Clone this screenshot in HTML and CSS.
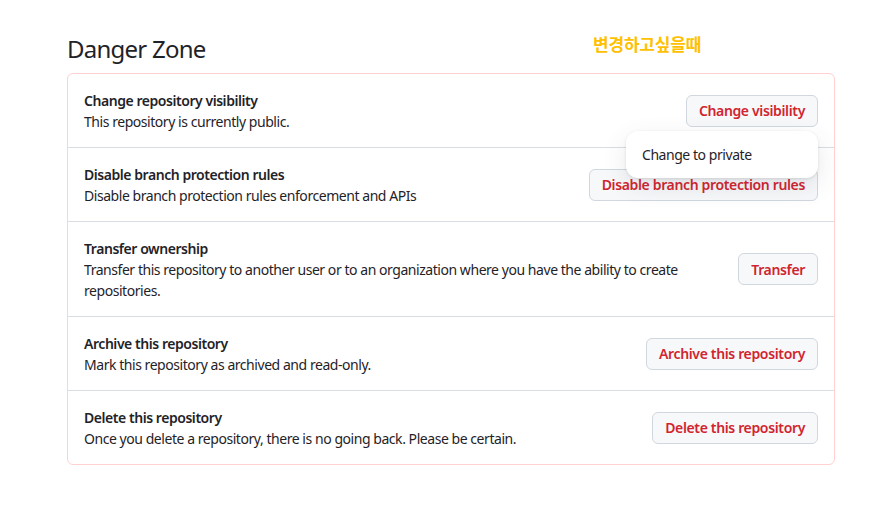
FILE: index.html
```html
<!DOCTYPE html>
<html lang="en">
<head>
<meta charset="utf-8">
<link rel="stylesheet" href="styles.css">
</head>
<body>
<div class="page">
  <div class="head">
    <h2 class="title">Danger Zone</h2>
    <span class="note">변경하고싶을때</span>
  </div>
  <div class="zone">
    <div class="row">
      <div class="info">
        <div class="row-title">Change repository visibility</div>
        <div class="row-desc">This repository is currently public.</div>
      </div>
      <div class="action">
        <button class="btn">Change visibility</button>
        <div class="menu"><span>Change to private</span></div>
      </div>
    </div>
    <div class="row">
      <div class="info">
        <div class="row-title">Disable branch protection rules</div>
        <div class="row-desc">Disable branch protection rules enforcement and APIs</div>
      </div>
      <div class="action"><button class="btn">Disable branch protection rules</button></div>
    </div>
    <div class="row">
      <div class="info">
        <div class="row-title">Transfer ownership</div>
        <div class="row-desc">Transfer this repository to another user or to an organization where you have the ability to create repositories.</div>
      </div>
      <div class="action"><button class="btn">Transfer</button></div>
    </div>
    <div class="row">
      <div class="info">
        <div class="row-title">Archive this repository</div>
        <div class="row-desc">Mark this repository as archived and read-only.</div>
      </div>
      <div class="action"><button class="btn">Archive this repository</button></div>
    </div>
    <div class="row">
      <div class="info">
        <div class="row-title">Delete this repository</div>
        <div class="row-desc">Once you delete a repository, there is no going back. Please be certain.</div>
      </div>
      <div class="action"><button class="btn">Delete this repository</button></div>
    </div>
  </div>
</div>
</body>
</html>
```

FILE: styles.css
```css
* { box-sizing: border-box; }
html, body { margin: 0; background: #fff; }
body {
  font-family: "Noto Sans", "Noto Sans CJK KR", sans-serif;
  color: #1f2328;
  font-size: 14px;
  letter-spacing: -0.45px;
}
.page {
  width: 768px;
  margin-left: 67px;
  padding-top: 31px;
}
.head {
  position: relative;
  margin-bottom: 6px;
}
.title {
  margin: 0;
  font-size: 24px;
  font-weight: 400;
  line-height: 36px;
  letter-spacing: -0.75px;
}
.note {
  position: absolute;
  left: 526px;
  top: 0;
  color: #ffc000;
  font-family: "Noto Sans CJK KR", sans-serif;
  font-weight: 700;
  font-size: 17px;
  letter-spacing: -0.2px;
}
.zone {
  border: 1px solid #ffd1d1;
  border-radius: 6px;
}
.row {
  display: flex;
  align-items: center;
  gap: 16px;
  padding: 17px 16px 15px;
  border-top: 1px solid #d8dee4;
}
.row:first-child { border-top: 0; }
.info { flex: 1; }
.row-title {
  font-weight: 600;
  line-height: 20px;
}
.row-desc { line-height: 21px; }
.action { position: relative; flex: none; align-self: center; }
.btn {
  font-family: inherit;
  font-size: 14px;
  font-weight: 600;
  letter-spacing: -0.35px;
  color: #d1242f;
  background: #f6f8fa;
  border: 1px solid #d0d7de;
  border-radius: 6px;
  height: 32px;
  padding: 0 12px;
  margin-top: -2px;
  cursor: pointer;
}
.menu {
  position: absolute;
  right: 0;
  top: 34px;
  width: 192px;
  height: 47px;
  background: #fff;
  border-radius: 12px;
  box-shadow: 0 1px 3px rgba(31,35,40,0.12), 0 8px 24px rgba(66,74,83,0.12);
  padding: 0 16px;
  display: flex;
  align-items: center;
  z-index: 2;
}
```
